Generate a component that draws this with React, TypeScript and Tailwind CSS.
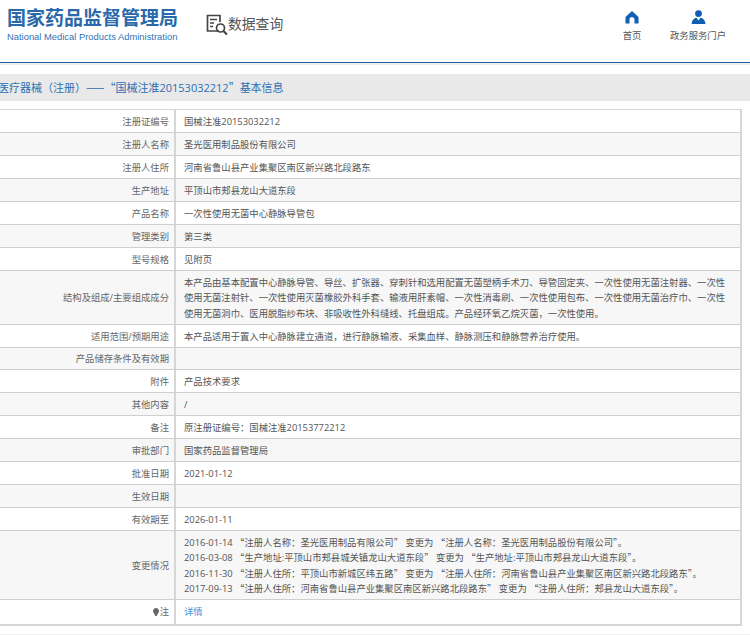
const ROWS: { label: string; lines?: string[]; h: string }[] = [
    { label: '注册证编号', lines: ['国械注准20153032212'], h: 'h-[23px]' },
    { label: '注册人名称', lines: ['圣光医用制品股份有限公司'], h: 'h-[23px]' },
    { label: '注册人住所', lines: ['河南省鲁山县产业集聚区南区新兴路北段路东'], h: 'h-[23px]' },
    { label: '生产地址', lines: ['平顶山市郏县龙山大道东段'], h: 'h-[23px]' },
    { label: '产品名称', lines: ['一次性使用无菌中心静脉导管包'], h: 'h-[23px]' },
    { label: '管理类别', lines: ['第三类'], h: 'h-[23px]' },
    { label: '型号规格', lines: ['见附页'], h: 'h-[23px]' },
    {
        label: '结构及组成/主要组成成分',
        lines: [
            '本产品由基本配置中心静脉导管、导丝、扩张器、穿刺针和选用配置无菌塑柄手术刀、导管固定夹、一次性使用无菌注射器、一次性',
            '使用无菌注射针、一次性使用灭菌橡胶外科手套、输液用肝素帽、一次性消毒刷、一次性使用包布、一次性使用无菌治疗巾、一次性',
            '使用无菌洞巾、医用脱脂纱布块、非吸收性外科缝线、托盘组成。产品经环氧乙烷灭菌，一次性使用。',
        ],
        h: 'h-[54px]',
    },
    { label: '适用范围/预期用途', lines: ['本产品适用于置入中心静脉建立通道，进行静脉输液、采集血样、静脉测压和静脉营养治疗使用。'], h: 'h-[23px]' },
    { label: '产品储存条件及有效期', h: 'h-[22px]' },
    { label: '附件', lines: ['产品技术要求'], h: 'h-[23px]' },
    { label: '其他内容', lines: ['/'], h: 'h-[23px]' },
    { label: '备注', lines: ['原注册证编号：国械注准20153772212'], h: 'h-[23px]' },
    { label: '审批部门', lines: ['国家药品监督管理局'], h: 'h-[23px]' },
    { label: '批准日期', lines: ['2021-01-12'], h: 'h-[23px]' },
    { label: '生效日期', h: 'h-[23px]' },
    { label: '有效期至', lines: ['2026-01-11'], h: 'h-[23px]' },
    {
        label: '变更情况',
        lines: [
            '2016-01-14 “注册人名称：圣光医用制品有限公司” 变更为 “注册人名称：圣光医用制品股份有限公司”。',
            '2016-03-08 “生产地址:平顶山市郏县城关镇龙山大道东段” 变更为 “生产地址:平顶山市郏县龙山大道东段”。',
            '2016-11-30 “注册人住所：平顶山市新城区纬五路” 变更为 “注册人住所：河南省鲁山县产业集聚区南区新兴路北段路东”。',
            '2017-09-13 “注册人住所：河南省鲁山县产业集聚区南区新兴路北段路东” 变更为 “注册人住所：郏县龙山大道东段”。',
        ],
        h: 'h-[69px]',
    },
];

// quotes and dashes come from the CJK face, digits from Open Sans
function Txt({ children }: { children: string }) {
    return (
        <>
            {children.split(/([“”—]+)/).map((part, i) =>
                i % 2 === 1 ? (
                    <span key={i} className="font-['Noto_Sans_CJK_SC',sans-serif]">{part}</span>
                ) : (
                    <span key={i}>{part}</span>
                ),
            )}
        </>
    );
}

function Row({ label, lines, h, shaded }: { label: string; lines?: string[]; h: string; shaded: boolean }) {
    return (
        <div className={`flex border-b border-[#cfcfcf] ${h} ${shaded ? 'bg-[#f7f7f7]' : 'bg-white'}`}>
            <div className="w-[176px] shrink-0 flex items-center justify-end pt-[1px] pr-[5px] border-r-2 border-[#d6d6d6] text-[#666]">
                {label}
            </div>
            <div className="flex-1 flex flex-col justify-center pt-[1px] pl-[8px] text-[#555] leading-[15.5px] whitespace-pre overflow-hidden">
                {lines?.map((l) => <div key={l}><Txt>{l}</Txt></div>)}
            </div>
        </div>
    );
}

export default function App() {
    return (
        <div className="w-[750px] h-[635px] overflow-hidden bg-white text-[9.33px] font-['Open_Sans','Noto_Sans_CJK_SC',sans-serif]">
            {/* header */}
            <div className="h-[62px] flex items-start">
                <div className="w-[180px] ml-[7px] mt-[8px] shrink-0">
                    <div className="text-[19px] leading-[21px] font-bold text-[#2a69a9] whitespace-nowrap">国家药品监督管理局</div>
                    <div className="text-[9.4px] leading-[12px] mt-[2px] text-[#2f74b5] whitespace-nowrap font-['Liberation_Sans',sans-serif]">National Medical Products Administration</div>
                </div>
                <div className="flex items-center ml-[19px] mt-[14px]">
                    <svg width="22" height="22" viewBox="0 0 22 22" fill="none" stroke="#444" strokeWidth="1.7">
                        <path d="M13 17H1.5V1.5H14V8" />
                        <path d="M4 5.5h7M4 9h4M4 12.5h3" />
                        <circle cx="14.5" cy="14" r="4" />
                        <path d="M17.5 17l3.5 3.5" strokeWidth="2.2" />
                    </svg>
                    <span className="text-[13.8px] leading-[20px] mb-[2px] text-[#555]">数据查询</span>
                </div>
                <div className="ml-auto flex">
                    <div className="w-[48px] mr-[13px] mt-[10px] flex flex-col items-center">
                        <svg width="14" height="14" viewBox="0 0 14 14" fill="#0f5fb5">
                            <path d="M7 1L13.5 7V13.5H9.5V9.5a2.5 2.5 0 0 0-5 0V13.5H.5V7z" />
                        </svg>
                        <span className="mt-[6px] text-[#555] leading-[12px]">首页</span>
                    </div>
                    <div className="w-[58px] mr-[23px] mt-[10px] flex flex-col items-center">
                        <svg width="15" height="14" viewBox="0 0 15 14" fill="#0f5fb5">
                            <circle cx="7.5" cy="3.6" r="3.4" />
                            <path d="M0.5 14C1 10 3 8.2 5.5 7.8L7.5 10.5L9.5 7.8C12 8.2 14 10 14.5 14z" />
                        </svg>
                        <span className="mt-[6px] text-[#555] leading-[12px] whitespace-nowrap">政务服务门户</span>
                    </div>
                </div>
            </div>
            <div className="h-[1px] bg-[#1f5f9f]" />
            <div className="h-[2px] bg-[#eeeeee]" />

            {/* title band */}
            <div className="mt-[9px] h-[27px] bg-[#e9e9e9] flex items-center overflow-hidden">
                <div className="-ml-[2px] text-[11px] text-[#2c6fb3] whitespace-nowrap">
                    <Txt>医疗器械（注册）——“国械注准20153032212”基本信息</Txt>
                </div>
            </div>

            {/* detail table */}
            <div className="mt-[8px] w-[742px] border-t border-r-2 border-b-2 border-[#d6d6d6]">
                {ROWS.map((r, i) => (
                    <Row key={r.label} label={r.label} lines={r.lines} h={r.h} shaded={i % 2 === 1} />
                ))}
                <div className="flex h-[24px] bg-white">
                    <div className="w-[176px] shrink-0 flex items-center justify-end pr-[5px] border-r-2 border-[#d6d6d6] text-[#666]">
                        <svg width="6" height="8" viewBox="0 0 6 8" fill="#666" className="mr-[1px]">
                            <path d="M3 0a3 3 0 0 1 2 5.2L3.7 8H2.3L1 5.2A3 3 0 0 1 3 0z" />
                        </svg>
                        注
                    </div>
                    <div className="flex-1 flex items-center pl-[8px] text-[#4a90d9]">详情</div>
                </div>
            </div>
            <div className="mt-[8px] h-[2px] bg-[#eeeeee]" />
        </div>
    );
}
